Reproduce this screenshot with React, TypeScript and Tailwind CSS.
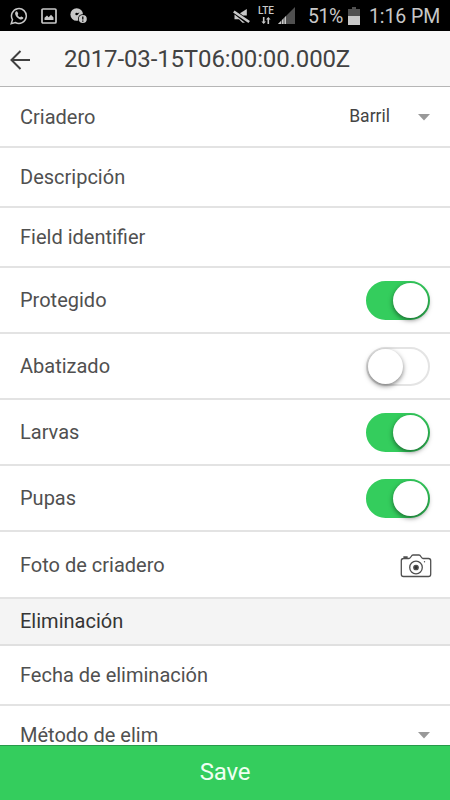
import React from "react";

function Row({ label, className, children }: { label: string; className: string; children?: React.ReactNode }) {
  return (
    <div className={`flex shrink-0 items-center justify-between border-b-2 border-[#e3e3e3] pl-5 pr-5 ${className}`}>
      <span className="whitespace-nowrap text-[20px] leading-6 text-[#505050]">{label}</span>
      {children}
    </div>
  );
}

function Toggle({ on = false }: { on?: boolean }) {
  return (
    <span
      className={`flex h-[39px] w-[64px] shrink-0 items-center rounded-full border-2 ${
        on ? "justify-end border-[#34cd5d] bg-[#34cd5d]" : "justify-start border-[#e4e4e4] bg-white"
      }`}
    >
      <span className="h-[35px] w-[35px] rounded-full bg-white shadow-[0_2px_5px_rgba(0,0,0,0.5)]" />
    </span>
  );
}

function Caret() {
  return (
    <svg width="12" height="7" viewBox="0 0 12 7" className="mt-px block" fill="#999">
      <path d="M0 0h12L6 6.5z" />
    </svg>
  );
}

function WhatsApp() {
  return (
    <svg width="18" height="18" viewBox="0 0 18 18" fill="none">
      <path d="M1.2 16.7 2.5 12.7A7.4 7.4 0 1 1 5.4 15.5Z" stroke="#c8c8c8" strokeWidth="1.5" />
      <path d="M6 4.5c-1.7 1.5-.7 4 1.2 5.9s4.400 2.900 5.800 1.300c.6-.7.4-1.100-.2-1.400l-1.400-.7c-.5-.2-.8.100-1.200.7-1.200-.4-2.100-1.300-2.600-2.400.6-.5.8-.8.6-1.300l-.7-1.600c-.2-.5-.8-.9-1.500-.5z" fill="#c8c8c8" />
    </svg>
  );
}

function StatusBar() {
  return (
    <div className="flex h-[31px] shrink-0 items-center bg-black text-[#c8c8c8]">
      <div className="ml-[10px] flex w-[80px] items-center gap-[13px]">
        <WhatsApp />
        <svg width="16" height="16" viewBox="0 0 16 16" className="shrink-0">
          <rect x="1" y="1" width="14" height="14" rx="1" fill="none" stroke="#c8c8c8" strokeWidth="1.7" />
          <path d="M3.500 12V9.800L6 7.500l1.700 1.700L10 6.700l2.500 2.800V12z" fill="#c8c8c8" />
        </svg>
        <svg width="18" height="17" viewBox="0 0 18 17" className="shrink-0">
          <circle cx="6.700" cy="7.500" r="6.300" fill="#c8c8c8" />
          <path d="M6.500 6.500 9.500 5.500l-2 2.500z" fill="#000" />
          <circle cx="6.500" cy="7" r="1.200" fill="#000" />
          <circle cx="12.800" cy="12" r="4.800" fill="#000" />
          <circle cx="12.800" cy="12" r="4" fill="#c8c8c8" />
          <path d="M12.800 9.500v3M12.800 13.500v1.200" stroke="#000" strokeWidth="1.300" />
        </svg>
      </div>
      <svg width="17" height="17" viewBox="0 0 17 17" className="ml-[143px] mt-[2px] shrink-0">
        <path d="M7 5.200 13.800 1v6.500H10z" fill="#c8c8c8" />
        <path d="M1.500 6.500 12 14.800H9.500L6 11.200H1.500z" fill="#c8c8c8" />
        <path d="M.8 3.500 16.200 14" stroke="#c8c8c8" strokeWidth="2.600" />
      </svg>
      <div className="ml-[7px] flex w-[18px] flex-col items-center pb-px">
        <span className="text-[10px] font-medium leading-[10px]">LTE</span>
        <svg width="10" height="7" viewBox="0 0 10 7" className="mt-px">
          <path d="M1.900 0h1.600v4.500h1.500L2.700 7 .4 4.500h1.500zM7.300 0 5 2.500h1.500V7h1.600V2.500h1.500z" fill="#c8c8c8" />
        </svg>
      </div>
      <svg width="18" height="18" viewBox="0 0 18 18" className="ml-[3px] mt-px shrink-0">
        <path d="M17 0v17H0z" fill="#505050" />
        <path d="M8 9v8H0z" fill="#c8c8c8" />
        <path d="M3.500 12v5M6 9v8" stroke="#000" strokeWidth=".6" />
      </svg>
      <span className="ml-[12px] mt-[2px] w-[36px] whitespace-nowrap text-[19.500px] leading-6 tracking-[-0.4px]">51%</span>
      <svg width="12" height="18" viewBox="0 0 12 18" className="ml-[4px] shrink-0">
        <path d="M4 0h4v2h4v7H0V2h4z" fill="#505050" />
        <path d="M0 9h12v9H0z" fill="#c8c8c8" />
      </svg>
      <span className="ml-[9px] mt-[2px] whitespace-nowrap text-[19.500px] leading-6 tracking-[-0.1px]">1:16 PM</span>
    </div>
  );
}

function Camera() {
  return (
    <svg width="32" height="26" viewBox="0 0 32 26" fill="none" stroke="#505050" strokeWidth="1.300" className="-mr-[2px] mt-[4px] shrink-0">
      <path d="M3.500 4.500h5.500c2 0 2-3.500 4-3.500h6c2 0 2 3.500 4 3.500h5.500a2.200 2.200 0 0 1 2.200 2.200v13.600a2.200 2.200 0 0 1-2.200 2.200h-25a2.200 2.200 0 0 1-2.200-2.200V6.700a2.200 2.200 0 0 1 2.200-2.200zM4 4.300V3h3v1.300" />
      <circle cx="16" cy="13.500" r="6.300" />
      <circle cx="16" cy="13.500" r="2.200" fill="#333" />
      <circle cx="24.500" cy="7.700" r=".7" fill="#505050" stroke="none" />
    </svg>
  );
}

export default function App() {
  return (
    <div className="flex h-[800px] w-[450px] flex-col overflow-hidden bg-white font-[Roboto,sans-serif]">
      <StatusBar />
      <header className="flex h-[56px] shrink-0 items-center border-b border-[#b6b6b6] bg-[#f8f8f8]">
        <svg width="20" height="20" viewBox="0 0 20 20" fill="none" stroke="#404040" strokeWidth="2" className="ml-[10px] mt-[2px]">
          <path d="M20 10H1.500M10.500 1 1.500 10l9 9" />
        </svg>
        <h1 className="ml-[34px] whitespace-nowrap text-[24px] font-normal leading-7 tracking-[-0.13px] text-[#424242]">2017-03-15T06:00:00.000Z</h1>
      </header>
      <main className="flex min-h-0 flex-1 flex-col overflow-hidden">
        <Row label="Criadero" className="h-[61px]">
          <div className="flex items-center gap-[28px]">
            <span className="pb-[2px] text-[17.500px] leading-6 text-[#444]">Barril</span>
            <Caret />
          </div>
        </Row>
        <Row label="Descripción" className="h-[60px]" />
        <Row label="Field identifier" className="h-[60px]" />
        <Row label="Protegido" className="h-[66px]"><Toggle on /></Row>
        <Row label="Abatizado" className="h-[66px]"><Toggle /></Row>
        <Row label="Larvas" className="h-[66px]"><Toggle on /></Row>
        <Row label="Pupas" className="h-[66px]"><Toggle on /></Row>
        <Row label="Foto de criadero" className="h-[67px]"><Camera /></Row>
        <div className="flex h-[47px] shrink-0 items-center border-b-2 border-[#e0e0e0] bg-[#f4f4f4] px-5 pb-[2px] text-[20px] text-[#353535]">Eliminación</div>
        <Row label="Fecha de eliminación" className="h-[60px]" />
        <Row label="Método de elim" className="h-[60px]"><Caret /></Row>
      </main>
      <button className="h-[55px] shrink-0 border-t border-[#27994a] bg-[#34cd5d] pb-[2px] text-[24px] leading-7 tracking-[-0.2px] text-[#effff2]">Save</button>
    </div>
  );
}
